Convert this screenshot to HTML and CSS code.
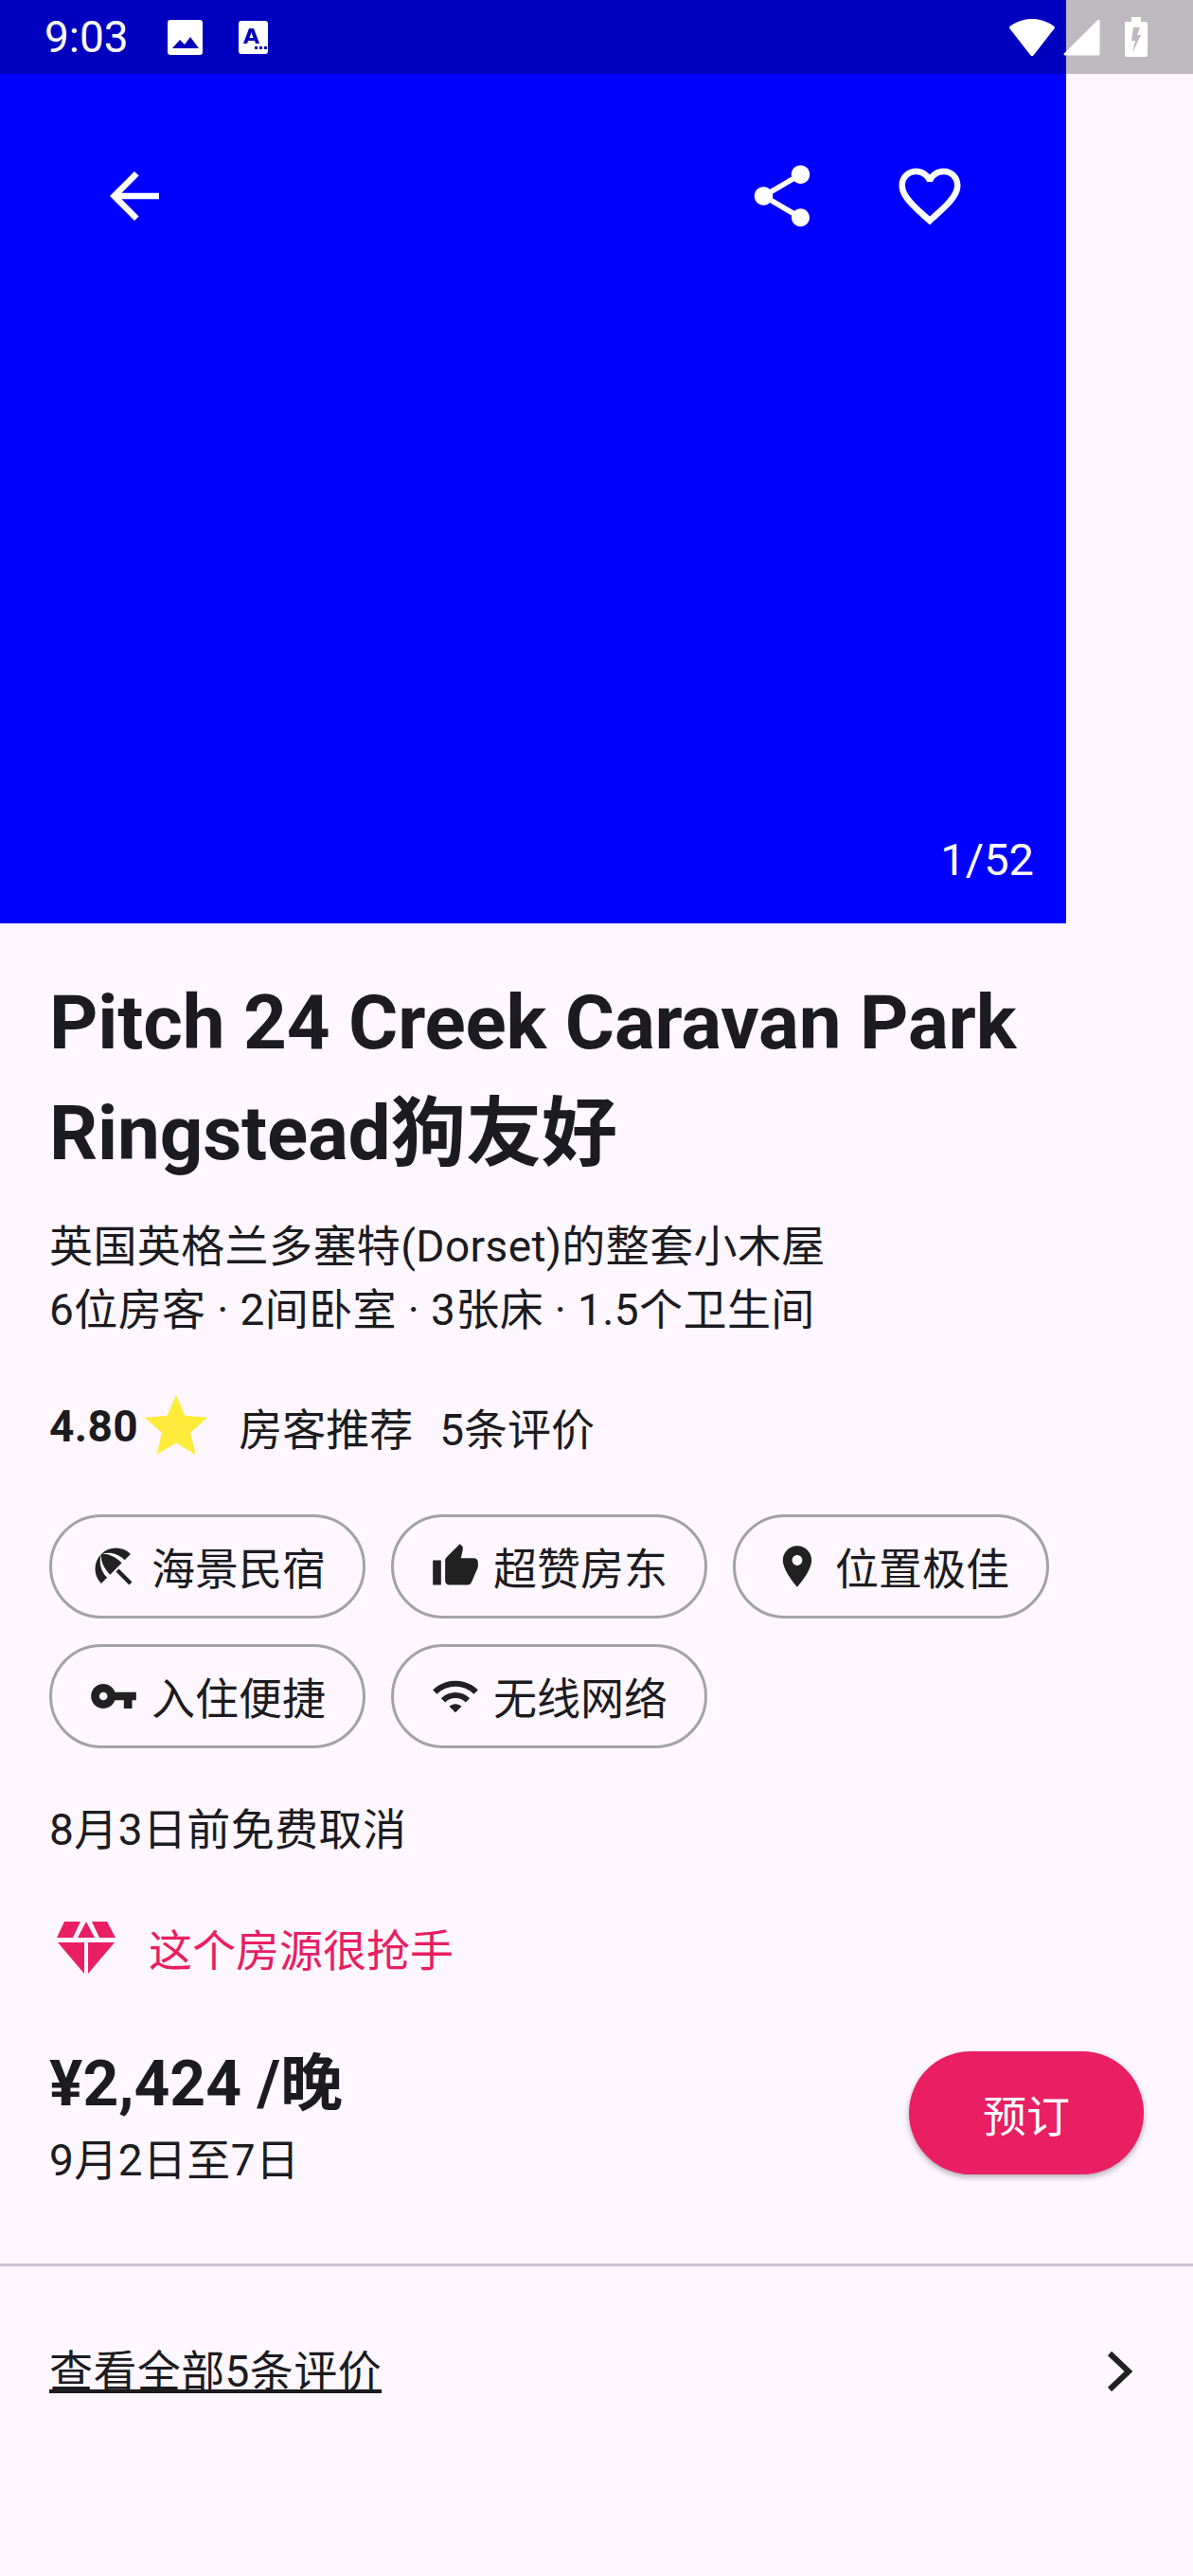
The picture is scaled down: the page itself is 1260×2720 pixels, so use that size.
FILE: index.html
```html
<!DOCTYPE html>
<html lang="zh">
<head>
<meta charset="utf-8">
<title>Pitch 24 Creek Caravan Park Ringstead狗友好</title>
<link rel="stylesheet" href="styles.css">
</head>
<body>
<div class="screen">

  <div class="hero">
    <div class="hero-bar">
      <svg class="icon-78" viewBox="0 0 24 24"><path d="M20 11H7.830l5.590-5.590L12 4l-8 8 8 8 1.410-1.410L7.830 13H20v-2z"/></svg>
      <div class="hero-actions">
        <svg class="icon-78" viewBox="0 0 24 24"><path d="M18 16.080c-.76 0-1.440.3-1.960.77L8.910 12.700c.05-.23.09-.46.09-.7s-.04-.47-.09-.7l7.050-4.110c.54.5 1.250.81 2.040.81 1.660 0 3-1.340 3-3s-1.340-3-3-3-3 1.340-3 3c0 .24.04.47.09.7L8.040 9.810C7.500 9.310 6.790 9 6 9c-1.660 0-3 1.340-3 3s1.340 3 3 3c.79 0 1.500-.31 2.040-.81l7.120 4.160c-.05.21-.08.43-.08.65 0 1.610 1.310 2.920 2.920 2.920 1.610 0 2.920-1.310 2.920-2.920s-1.310-2.920-2.920-2.920z"/></svg>
        <svg class="icon-78" viewBox="0 0 24 24"><path d="M16.500 3c-1.740 0-3.410.81-4.500 2.090C10.910 3.810 9.240 3 7.500 3 4.420 3 2 5.420 2 8.500c0 3.780 3.400 6.860 8.550 11.540L12 21.350l1.450-1.320C18.600 15.360 22 12.280 22 8.500 22 5.420 19.580 3 16.500 3zm-4.400 15.550l-.1.1-.1-.1C7.140 14.240 4 11.390 4 8.500 4 6.500 5.500 5 7.500 5c1.540 0 3.040.99 3.570 2.360h1.870C13.460 5.990 14.960 5 16.500 5c2 0 3.500 1.500 3.500 3.500 0 2.890-3.140 5.740-7.900 10.050z"/></svg>
      </div>
    </div>
    <div class="counter">1/52</div>
  </div>

  <!-- status bar sits over the photo -->
  <div class="statusbar">
    <div class="status-left">
      <span class="time">9:03</span>
      <svg class="st-image" viewBox="0 0 37 37"><path fill="#fff" fill-rule="evenodd" d="M3 0h31a3 3 0 0 1 3 3v31a3 3 0 0 1-3 3H3a3 3 0 0 1-3-3V3a3 3 0 0 1 3-3zM5 30h28l-9-12-6 8-5-5z"/></svg>
      <svg class="st-alpha" viewBox="0 0 31 35"><path fill="#fff" fill-rule="evenodd" d="M3 0h25a3 3 0 0 1 3 3v29a3 3 0 0 1-3 3H3a3 3 0 0 1-3-3V3a3 3 0 0 1 3-3zM11 8 5 24h4l1-3h7l1 3h4L16 8zM11.500 18l2-6 2 6zM17 27h3v3h-3zM22 27h3v3h-3zM27 27h3v3h-3z"/></svg>
    </div>
    <div class="status-right">
      <svg class="st-wifi" viewBox="0 0 50 41"><path fill="#fff" d="M25 1c8 0 16 2.500 23 7.500 1 .8 1.200 1.800.5 2.700L26.500 39.500c-.8 1-2.200 1-3 0L1.500 11.200C.8 10.300 1 9.300 2 8.500 9 3.500 17 1 25 1z"/></svg>
      <svg class="st-signal" viewBox="0 0 39 39"><path fill="#fff" d="M36 1.500c1.500-1.500 2.500-1 2.500 1V37c0 1-.7 1.500-1.500 1.500H2c-1.500 0-2-1.300-1-2.300z"/></svg>
      <svg class="st-battery" viewBox="0 0 24 42"><path fill="#fff" fill-rule="evenodd" d="M7 0h10v5h5a2 2 0 0 1 2 2v33a2 2 0 0 1-2 2H2a2 2 0 0 1-2-2V7a2 2 0 0 1 2-2h5zM9 11l-2 14h4l-3 13 9-19h-4l3-8z"/></svg>
    </div>
  </div>

  <div class="content">
    <h1 class="title">Pitch 24 Creek Caravan Park Ringstead狗友好</h1>
    <p class="subtitle">英国英格兰多塞特(Dorset)的整套小木屋<br>6位房客 · 2间卧室 · 3张床 · 1.5个卫生间</p>

    <div class="rating">
      <b class="score">4.80</b>
      <svg class="star" viewBox="0 0 24 24"><path d="M12 17.270L18.180 21l-1.640-7.030L22 9.240l-7.190-.61L12 2 9.190 8.630 2 9.240l5.460 4.730L5.820 21z"/></svg>
      <span class="rating-text">房客推荐</span>
      <span class="rating-count">5条评价</span>
    </div>

    <div class="chips">
      <div class="chip">
        <svg class="chip-icon" viewBox="0 0 24 24"><path d="M13.127 14.560l1.430-1.430 6.440 6.443L19.570 21zm4.293-5.730l2.860-2.860c-3.950-3.950-10.350-3.960-14.300-.02 3.930-1.300 8.310-.25 11.440 2.880zM5.950 5.980c-3.940 3.950-3.930 10.350.02 14.300l2.860-2.860C5.700 14.290 4.650 9.910 5.950 5.980zm.02-.02l-.01.01c-.38 3.010 1.170 6.880 4.300 10.020l5.730-5.730c-3.130-3.130-7.010-4.680-10.020-4.300z"/></svg>
        <span>海景民宿</span>
      </div>
      <div class="chip">
        <svg class="chip-icon" viewBox="0 0 24 24"><path d="M1 21h4V9H1v12zm22-11c0-1.100-.9-2-2-2h-6.310l.95-4.570.03-.32c0-.41-.17-.79-.44-1.060L14.170 1 7.590 7.590C7.220 7.950 7 8.450 7 9v10c0 1.100.9 2 2 2h9c.83 0 1.540-.5 1.840-1.220l3.020-7.050c.09-.23.14-.47.14-.73v-2z"/></svg>
        <span>超赞房东</span>
      </div>
      <div class="chip">
        <svg class="chip-icon" viewBox="0 0 24 24"><path d="M12 2C8.130 2 5 5.130 5 9c0 5.250 7 13 7 13s7-7.750 7-13c0-3.870-3.130-7-7-7zm0 9.500c-1.380 0-2.500-1.120-2.500-2.500s1.120-2.500 2.500-2.500 2.500 1.120 2.500 2.500-1.120 2.500-2.500 2.500z"/></svg>
        <span>位置极佳</span>
      </div>
      <div class="chip">
        <svg class="chip-icon" viewBox="0 0 24 24"><path d="M12.650 10C11.830 7.670 9.610 6 7 6c-3.310 0-6 2.690-6 6s2.690 6 6 6c2.610 0 4.830-1.670 5.650-4H17v4h4v-4h2v-4H12.650zM7 14c-1.100 0-2-.9-2-2s.9-2 2-2 2 .9 2 2-.9 2-2 2z"/></svg>
        <span>入住便捷</span>
      </div>
      <div class="chip">
        <svg class="chip-icon" viewBox="0 0 24 24"><path d="M1 9l2 2c4.970-4.970 13.030-4.970 18 0l2-2C16.930 2.930 7.080 2.930 1 9zm8 8l3 3 3-3c-1.650-1.660-4.340-1.660-6 0zm-4-4l2 2c2.760-2.760 7.240-2.760 10 0l2-2C15.140 9.140 8.870 9.140 5 13z"/></svg>
        <span>无线网络</span>
      </div>
    </div>

    <p class="cancel">8月3日前免费取消</p>

    <div class="rare">
      <svg class="rare-icon" viewBox="0 0 62 56"><path d="M8 0h17l-8 17H0zM31 0l9 17H22zM37 0h16l9 17H45zM1 22h28v33zM33 22h28L33 55z"/></svg>
      <span>这个房源很抢手</span>
    </div>

    <div class="booking">
      <div>
        <div class="price">¥2,424 /晚</div>
        <div class="dates">9月2日至7日</div>
      </div>
      <div class="book-btn">预订</div>
    </div>
  </div>

  <div class="reviews">
    <span class="reviews-link">查看全部5条评价</span>
    <svg class="chevron" viewBox="0 0 84 84"><path d="M32 23l20 19-20 19"/></svg>
  </div>

</div>
</body>
</html>
```

FILE: styles.css
```css
html, body {
  margin: 0;
  padding: 0;
}
body {
  background-color: #fef7ff;
  color: #1c1b1f;
  font-family: Roboto, "Noto Sans CJK SC", sans-serif;
  font-size: 46px;
  letter-spacing: 0.4px;
}
p, h1 {
  margin: 0;
}
.screen {
  position: relative;
  width: 1260px;
  height: 2720px;
  overflow: hidden;
}

/* status bar */
.statusbar {
  position: absolute;
  top: 0;
  left: 0;
  right: 0;
  height: 78px;
  padding: 0 48px 0 47px;
  box-sizing: border-box;
  background-color: rgba(0, 0, 0, 0.25);
  display: flex;
  justify-content: space-between;
  align-items: center;
  color: white;
}
.status-left,
.status-right {
  display: flex;
  align-items: center;
}
.time {
  font-size: 46px;
  line-height: 50px;
  letter-spacing: 0;
  width: 130px;
}
.st-image {
  width: 37px;
  height: 37px;
}
.st-alpha {
  width: 31px;
  height: 35px;
  margin-left: 38px;
}
.st-wifi {
  width: 50px;
  height: 41px;
}
.st-signal {
  width: 39px;
  height: 39px;
  margin-left: 8px;
}
.st-battery {
  width: 24px;
  height: 42px;
  margin-left: 26px;
}

/* photo */
.hero {
  position: relative;
  width: 1126px;
  height: 975px;
  background-color: #0000ff;
  padding: 168px 0 0 103px;
  box-sizing: border-box;
}
.hero-bar {
  display: flex;
  justify-content: space-between;
  width: 918px;
}
.hero-actions {
  display: flex;
  gap: 78px;
}
.icon-78 {
  width: 78px;
  height: 78px;
  fill: white;
  display: block;
}
.counter {
  position: absolute;
  right: 34px;
  bottom: 39px;
  color: white;
  font-size: 47px;
  line-height: 56px;
  letter-spacing: 0;
}

/* details */
.content {
  padding: 0 52px;
}
.title {
  font-size: 80px;
  font-weight: 700;
  line-height: 117px;
  letter-spacing: -0.2px;
  padding-top: 47px;
}
.subtitle {
  margin-top: 27px;
  line-height: 67px;
}
.rating {
  display: flex;
  align-items: center;
  height: 80px;
  margin-top: 49px;
}
.score {
  font-weight: 700;
  letter-spacing: 0.4px;
}
.star {
  width: 80px;
  height: 80px;
  fill: #ffeb3b;
  margin-left: 0;
}
.rating-text {
  margin-left: 26px;
  letter-spacing: 0;
}
.rating-count {
  margin-left: 28px;
  letter-spacing: 0;
}
.chips {
  display: flex;
  flex-wrap: wrap;
  gap: 27px;
  margin-top: 53px;
  letter-spacing: 0;
}
.chip {
  width: 334px;
  height: 110px;
  box-sizing: border-box;
  border: 3px solid #a3a3a3;
  border-radius: 55px;
  display: flex;
  align-items: center;
  justify-content: center;
  gap: 14px;
}
.chip span {
  margin-bottom: 3px;
}
.chip-icon {
  width: 52px;
  height: 52px;
  fill: #212121;
}
.cancel {
  margin-top: 53px;
  line-height: 67px;
}
.rare {
  display: flex;
  align-items: center;
  margin-top: 55px;
  height: 72px;
  color: #e91e63;
  letter-spacing: 0;
}
.rare span {
  margin-bottom: 3px;
}
.rare-icon {
  width: 62px;
  height: 56px;
  fill: #e91e63;
  margin: 0 35px 0 8px;
}
.booking {
  display: flex;
  justify-content: space-between;
  align-items: center;
  margin-top: 68px;
}
.price {
  font-size: 66px;
  font-weight: 700;
  line-height: 80px;
  letter-spacing: 0;
}
.dates {
  line-height: 67px;
  margin-top: 7px;
}
.book-btn {
  width: 248px;
  height: 130px;
  margin-bottom: 14px;
  border-radius: 65px;
  background-color: #e91e63;
  color: white;
  letter-spacing: 0;
  display: flex;
  align-items: center;
  justify-content: center;
  box-shadow: 0 3px 6px rgba(0, 0, 0, 0.3);
}
.reviews {
  margin-top: 75px;
  border-top: 3px solid #cac4d0;
  padding: 69px 36px 0 52px;
  display: flex;
  justify-content: space-between;
  align-items: center;
}
.reviews-link {
  text-decoration: underline;
  line-height: 72px;
}
.chevron {
  width: 84px;
  height: 84px;
  fill: none;
  stroke: #212121;
  stroke-width: 6;
}
```
